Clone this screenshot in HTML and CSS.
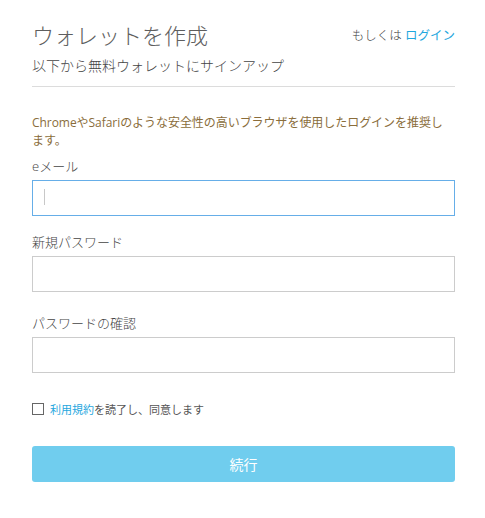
FILE: index.html
```html
<!DOCTYPE html>
<html lang="ja">
<head>
<meta charset="utf-8">
<title>ウォレットを作成</title>
<link rel="stylesheet" href="styles.css">
</head>
<body>
<main class="signup">
  <header class="signup__header">
    <div class="signup__top">
      <h1 class="signup__title">ウォレットを作成</h1>
      <p class="signup__alt">もしくは <a class="link" href="#">ログイン</a></p>
    </div>
    <p class="signup__subtitle">以下から無料ウォレットにサインアップ</p>
  </header>

  <p class="signup__warning">ChromeやSafariのような安全性の高いブラウザを使用したログインを推奨し<span class="nowrap">ます。</span></p>

  <form class="signup__form">
    <div class="field">
      <label class="field__label" for="email">eメール</label>
      <div class="field__control">
        <input class="field__input field__input--focused" id="email" type="email">
        <span class="field__caret"></span>
      </div>
    </div>
    <div class="field field--spaced">
      <label class="field__label" for="pw">新規パスワード</label>
      <input class="field__input" id="pw" type="password">
    </div>
    <div class="field field--spaced-lg">
      <label class="field__label" for="pw2">パスワードの確認</label>
      <input class="field__input" id="pw2" type="password">
    </div>
    <label class="agree">
      <span class="agree__box"></span>
      <span class="agree__text"><a class="link" href="#">利用規約</a>を読了し、同意します</span>
    </label>
    <button class="btn-primary" type="button">続行</button>
  </form>
</main>
</body>
</html>
```
FILE: styles.css
```css
* { box-sizing: border-box; }
html, body { margin: 0; padding: 0; background: #fff; }
body {
  font-family: "Open Sans", "Noto Sans CJK JP", sans-serif;
  color: #555;
}
.signup {
  width: 423px;
  margin-left: 32px;
  padding-top: 20px;
}
.signup__header {
  border-bottom: 1px solid #dcdcdc;
  padding-bottom: 10px;
}
.signup__top {
  display: flex;
  justify-content: space-between;
  align-items: center;
}
.signup__title {
  margin: 0;
  font-size: 22px;
  line-height: 30px;
  font-weight: 300;
  color: #5e5e5e;
}
.signup__alt {
  margin: 0;
  font-size: 12.5px;
  line-height: 20px;
  font-weight: 300;
  color: #444;
  padding-top: 2px;
}
.link { color: #1fa7de; text-decoration: none; font-weight: 400; }
.signup__subtitle {
  margin: 6px 0 0;
  font-size: 14px;
  line-height: 20px;
  font-weight: 300;
  color: #444;
}
.signup__warning {
  margin: 27px 0 0;
  font-size: 12px;
  line-height: 17.5px;
  letter-spacing: -0.05px;
  color: #8a6d3b;
}
.nowrap { white-space: nowrap; }
.signup__form { margin-top: 7px; }
.field__label {
  display: block;
  font-size: 13px;
  line-height: 20px;
  margin-bottom: 4px;
  font-weight: 300;
  color: #444;
}
.field__control { position: relative; }
.field__input {
  display: block;
  width: 100%;
  height: 36px;
  border: 1px solid #ccc;
  border-radius: 0;
  padding: 0 12px;
  font: inherit;
  outline: none;
  background: #fff;
}
.field__input--focused { border-color: #66aee8; }
.field__caret {
  position: absolute;
  left: 12px;
  top: 9px;
  width: 1px;
  height: 16px;
  background: #c8c8c8;
}
.field--spaced { margin-top: 16px; }
.field--spaced-lg { margin-top: 21px; }
.agree {
  display: flex;
  align-items: center;
  margin-top: 26px;
  height: 20px;
  font-size: 11px;
  color: #555;
}
.agree__box {
  width: 12px;
  height: 12px;
  border: 1px solid #666;
  margin-right: 6px;
  flex: none;
}
.btn-primary {
  display: block;
  width: 100%;
  height: 36px;
  margin-top: 27px;
  border: none;
  border-radius: 3px;
  background: #70cdee;
  color: #fff;
  font: inherit;
  font-size: 14px;
}
```
